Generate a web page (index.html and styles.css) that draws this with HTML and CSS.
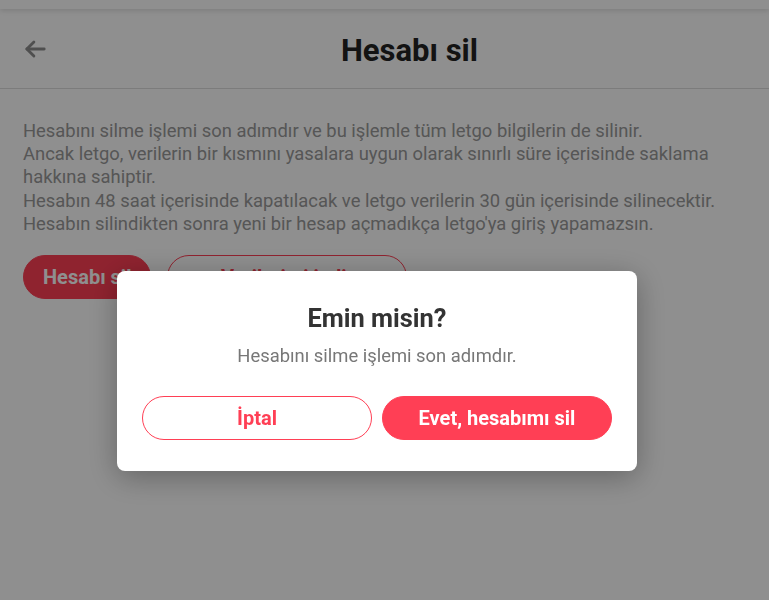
FILE: index.html
```html
<!DOCTYPE html>
<html lang="tr">
<head>
    <meta charset="UTF-8">
    <meta name="viewport" content="width=device-width, initial-scale=1.0">
    <title>Hesabı sil</title>
    <link rel="stylesheet" href="styles.css">
</head>
<body>
    <!-- Top strip above the page header -->
    <div class="topbar"></div>

    <!-- Page header with back arrow -->
    <header class="page-header">
        <a class="back-button" href="#" aria-label="Geri">
            <svg width="26" height="26" viewBox="0 0 24 24" fill="none" stroke="currentColor" stroke-width="2.6" stroke-linecap="round" stroke-linejoin="round">
                <path d="M20.5 12H4.5"></path>
                <path d="M11 5.5L4.5 12L11 18.5"></path>
            </svg>
        </a>
        <h1 class="page-title">Hesabı sil</h1>
    </header>

    <!-- Explanation and actions -->
    <main class="content">
        <p class="info">
            Hesabını silme işlemi son adımdır ve bu işlemle tüm letgo bilgilerin de silinir.<br>
            Ancak letgo, verilerin bir kısmını yasalara uygun olarak sınırlı süre içerisinde saklama hakkına sahiptir.<br>
            Hesabın 48 saat içerisinde kapatılacak ve letgo verilerin 30 gün içerisinde silinecektir.<br>
            Hesabın silindikten sonra yeni bir hesap açmadıkça letgo'ya giriş yapamazsın.
        </p>
        <div class="actions">
            <button type="button" class="btn btn-primary">Hesabı sil</button>
            <button type="button" class="btn btn-outline btn-wide">Verilerimi indir</button>
        </div>
    </main>

    <!-- Confirmation dialog -->
    <div class="overlay">
        <div class="modal">
            <h2 class="modal-title">Emin misin?</h2>
            <p class="modal-text">Hesabını silme işlemi son adımdır.</p>
            <div class="modal-actions">
                <button type="button" class="btn btn-outline">İptal</button>
                <button type="button" class="btn btn-primary">Evet, hesabımı sil</button>
            </div>
        </div>
    </div>
</body>
</html>
```

FILE: styles.css
```css
/* General page styles */
body {
    font-family: Roboto, "Liberation Sans", Arial, sans-serif;
    background-color: #fff;
    color: #999;
    margin: 0;
}
.topbar {
    height: 9px;
    background-color: #fff;
    box-shadow: 0 2px 5px rgba(0,0,0,0.12);
    position: relative;
}
/* Header */
.page-header {
    display: flex;
    align-items: center;
    height: 79px;
    border-bottom: 1px solid #ddd;
}
.back-button {
    width: 50px;
    display: flex;
    justify-content: flex-end;
    color: #8e8e8e;
    padding-top: 1px;
}
.back-button svg {
    display: block;
    margin-right: 2px;
}
.page-title {
    flex: 1;
    text-align: center;
    margin: 0;
    padding-top: 3px;
    font-size: 31px;
    font-weight: 700;
    color: #222;
}
/* Content */
.content {
    padding: 30px 23px;
}
.info {
    margin: 0;
    font-size: 18.4px;
    line-height: 23.2px;
}
.actions {
    display: flex;
    gap: 16px;
    margin-top: 20px;
}
/* Buttons */
.btn {
    height: 44px;
    border-radius: 22px;
    font-family: inherit;
    font-size: 20px;
    font-weight: 700;
    padding: 0 19px;
    cursor: pointer;
    box-sizing: border-box;
    white-space: nowrap;
}
.btn-primary {
    background-color: #ff3f55;
    border: 1px solid #ff3f55;
    color: #fff;
}
.btn-outline {
    background-color: #fff;
    border: 1px solid #ff3f55;
    color: #ff3f55;
}
.btn-wide {
    width: 240px;
}
/* Confirmation dialog */
.overlay {
    position: fixed;
    top: 0;
    left: 0;
    right: 0;
    bottom: 0;
    background-color: rgba(0,0,0,0.44);
    display: flex;
    justify-content: center;
    align-items: flex-start;
    padding: 271px 15px 0 0;
}
.modal {
    width: 520px;
    box-sizing: border-box;
    background-color: #fff;
    border-radius: 8px;
    box-shadow: 0 6px 30px rgba(0,0,0,0.3);
    padding: 32px 25px 31px;
    text-align: center;
}
.modal-title {
    margin: 0;
    font-size: 25.4px;
    line-height: 30px;
    color: #333;
}
.modal-text {
    margin: 12px 0 0;
    font-size: 18.4px;
    line-height: 22px;
    color: #777;
}
.modal-actions {
    display: flex;
    gap: 10px;
    margin-top: 29px;
}
.modal-actions .btn {
    flex: 1;
}
```
